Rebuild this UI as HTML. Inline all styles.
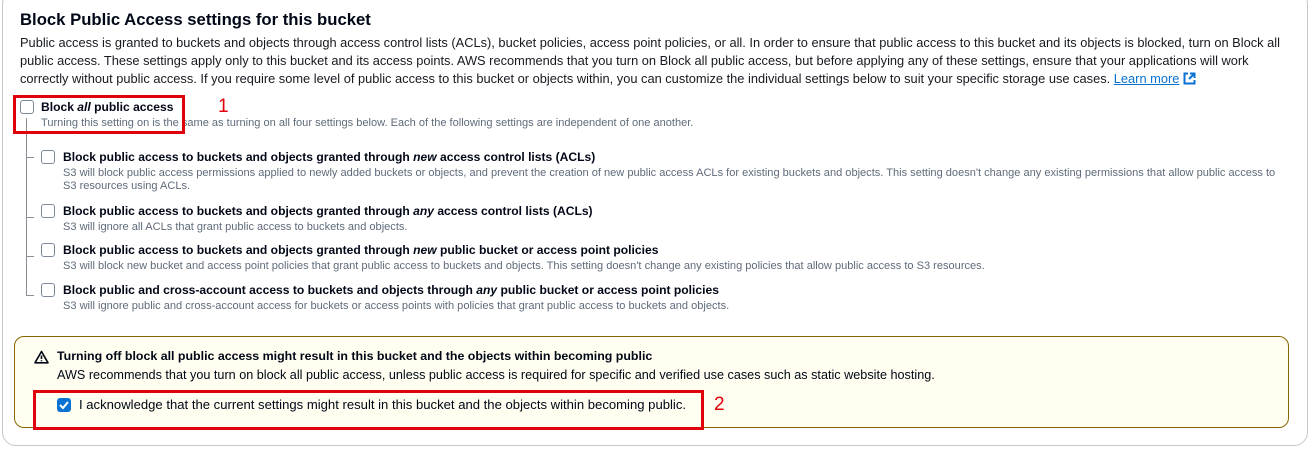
<!DOCTYPE html>
<html><head><style>
*{margin:0;padding:0;box-sizing:border-box}
body{width:1314px;height:449px;background:#fff;font-family:"Liberation Sans",sans-serif;color:#000716;position:relative;overflow:hidden}
.card{position:absolute;left:2px;top:-10px;width:1306px;height:456px;border:1px solid #c6c6cd;border-radius:14px;background:#fff}
.a{position:absolute;white-space:nowrap}
.p{font-size:12.83px;line-height:18px;color:#16191f}
.h{font-size:12.1px;font-weight:bold;line-height:16px}
.s{font-size:11.05px;color:#5f6b7a;line-height:13px}
.cb{position:absolute;width:14px;height:14px;border:1.5px solid #7d8998;border-radius:3px;background:#fff}
.red{position:absolute;border:3px solid #e0020b}
.num{position:absolute;color:#e0020b;font-size:19px}
.ln{position:absolute;background:#8c8c94}
</style></head><body>
<div class="card"></div>
<div class="a" style="left:20px;top:10px;font-size:16.7px;font-weight:bold">Block Public Access settings for this bucket</div>
<div class="a p" style="left:20px;top:34px">Public access is granted to buckets and objects through access control lists (ACLs), bucket policies, access point policies, or all. In order to ensure that public access to this bucket and its objects is blocked, turn on Block all</div>
<div class="a p" style="left:20px;top:52px">public access. These settings apply only to this bucket and its access points. AWS recommends that you turn on Block all public access, but before applying any of these settings, ensure that your applications will work</div>
<div class="a p" style="left:20px;top:70px">correctly without public access. If you require some level of public access to this bucket or objects within, you can customize the individual settings below to suit your specific storage use cases. <span style="color:#0972d3;text-decoration:underline">Learn more</span> <svg width="13" height="13" viewBox="0 0 13 13" style="vertical-align:-2px"><path d="M5 1.5H1.5v10h10V8" fill="none" stroke="#0972d3" stroke-width="2"/><path d="M7 1.5h4.5V6M11.5 1.5L6 7" fill="none" stroke="#0972d3" stroke-width="2"/></svg></div>

<div class="ln" style="left:26px;top:118px;width:1px;height:178px"></div>
<div class="ln" style="left:26px;top:157px;width:8px;height:1px"></div>
<div class="ln" style="left:26px;top:217px;width:8px;height:1px"></div>
<div class="ln" style="left:26px;top:256px;width:8px;height:1px"></div>
<div class="ln" style="left:26px;top:295px;width:8px;height:1px"></div>

<div class="cb" style="left:20px;top:100px"></div>
<div class="a h" style="left:41px;top:99px">Block <i>all</i> public access</div>
<div class="a s" style="left:41px;top:117px">Turning this setting on is the same as turning on all four settings below. Each of the following settings are independent of one another.</div>
<div class="red" style="left:13px;top:95px;width:172px;height:39px"></div>
<div class="num" style="left:218px;top:96px">1</div>

<div class="cb" style="left:41px;top:150px"></div>
<div class="a h" style="left:63px;top:149px">Block public access to buckets and objects granted through <i>new</i> access control lists (ACLs)</div>
<div class="a s" style="left:63px;top:167px">S3 will block public access permissions applied to newly added buckets or objects, and prevent the creation of new public access ACLs for existing buckets and objects. This setting doesn't change any existing permissions that allow public access to</div>
<div class="a s" style="left:63px;top:180px">S3 resources using ACLs.</div>

<div class="cb" style="left:41px;top:204px"></div>
<div class="a h" style="left:63px;top:203px">Block public access to buckets and objects granted through <i>any</i> access control lists (ACLs)</div>
<div class="a s" style="left:63px;top:221px">S3 will ignore all ACLs that grant public access to buckets and objects.</div>

<div class="cb" style="left:41px;top:243px"></div>
<div class="a h" style="left:63px;top:242px">Block public access to buckets and objects granted through <i>new</i> public bucket or access point policies</div>
<div class="a s" style="left:63px;top:260px">S3 will block new bucket and access point policies that grant public access to buckets and objects. This setting doesn't change any existing policies that allow public access to S3 resources.</div>

<div class="cb" style="left:41px;top:283px"></div>
<div class="a h" style="left:63px;top:282px">Block public and cross-account access to buckets and objects through <i>any</i> public bucket or access point policies</div>
<div class="a s" style="left:63px;top:300px">S3 will ignore public and cross-account access for buckets or access points with policies that grant public access to buckets and objects.</div>

<div style="position:absolute;left:14px;top:336px;width:1275px;height:92px;background:#fffef0;border:1px solid #8d6605;border-radius:10px"></div>
<svg class="a" style="left:34px;top:350px" width="15" height="14" viewBox="0 0 15 14"><path d="M7.5 1.5L1 12.8h13z" fill="none" stroke="#000716" stroke-width="1.6" stroke-linejoin="round"/><path d="M7.5 5.5v3.5M7.5 10.2v1.2" stroke="#000716" stroke-width="1.6"/></svg>
<div class="a" style="left:57px;top:349px;font-size:12.4px;font-weight:bold">Turning off block all public access might result in this bucket and the objects within becoming public</div>
<div class="a" style="left:57px;top:368px;font-size:12.65px">AWS recommends that you turn on block all public access, unless public access is required for specific and verified use cases such as static website hosting.</div>
<div style="position:absolute;left:57px;top:398px;width:14px;height:14px;background:#0972d3;border-radius:3px"><svg width="14" height="14" viewBox="0 0 14 14"><path d="M3 7l3 3 5-6" fill="none" stroke="#fff" stroke-width="2"/></svg></div>
<div class="a" style="left:79px;top:397px;font-size:13.1px">I acknowledge that the current settings might result in this bucket and the objects within becoming public.</div>
<div class="red" style="left:33px;top:390px;width:671px;height:40px"></div>
<div class="num" style="left:714px;top:394px">2</div>
</body></html>
